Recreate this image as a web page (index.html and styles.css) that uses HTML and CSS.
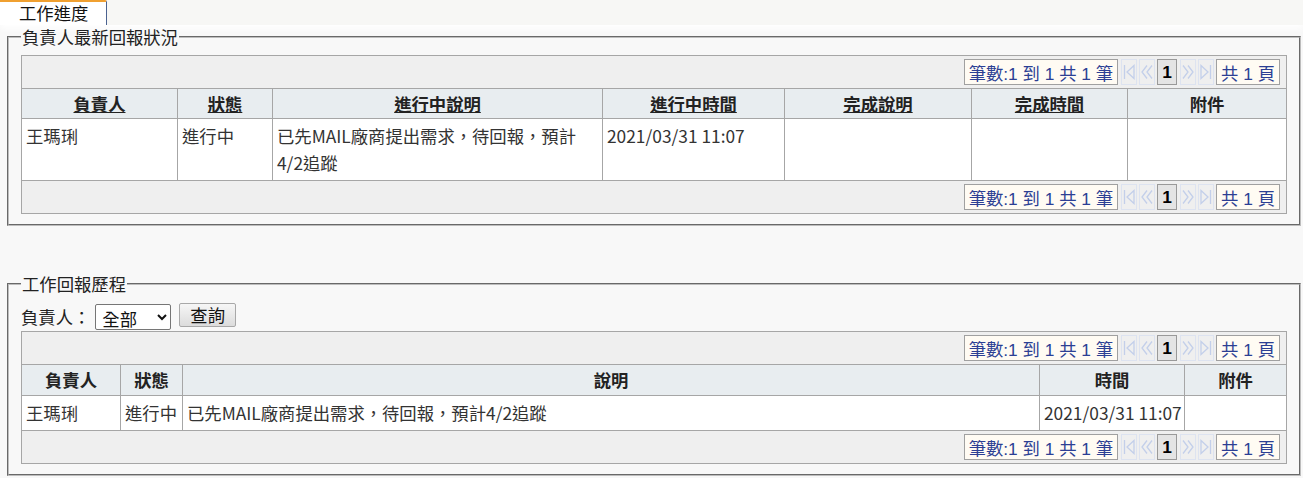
FILE: index.html
```html
<!DOCTYPE html>
<html lang="zh-Hant">
<head>
    <meta charset="UTF-8">
    <meta name="viewport" content="width=device-width, initial-scale=1.0">
    <title>工作進度</title>
    <link rel="stylesheet" href="styles.css">
</head>
<body>

    <div class="tabbar">
        <div class="tab">工作進度</div>
    </div>

    <div class="page">

        <fieldset class="box">
            <legend>負責人最新回報狀況</legend>
            <table class="grid">
                <colgroup>
                    <col style="width: 156px">
                    <col style="width: 95px">
                    <col style="width: 330px">
                    <col style="width: 182px">
                    <col style="width: 187px">
                    <col style="width: 156px">
                    <col>
                </colgroup>
                <tr class="pager-row">
                    <td colspan="7">
                        <div class="pager">
                            <span class="pg-info">筆數:1 到 1 共 1 筆</span>
                            <span class="pg-btn"><svg viewBox="0 0 14 22"><path d="M2.5 4v14M12 4.5l-7 6.5 7 6.5z"/></svg></span>
                            <span class="pg-btn"><svg viewBox="0 0 14 22"><path d="M7 4.5l-5 6.5 5 6.5M12 4.5l-5 6.5 5 6.5"/></svg></span>
                            <span class="pg-cur">1</span>
                            <span class="pg-btn"><svg viewBox="0 0 14 22"><path d="M2 4.5l5 6.5-5 6.5M7 4.5l5 6.5-5 6.5"/></svg></span>
                            <span class="pg-btn"><svg viewBox="0 0 14 22"><path d="M2 4.5l7 6.5-7 6.5zM11.5 4v14"/></svg></span>
                            <span class="pg-info">共 1 頁</span>
                        </div>
                    </td>
                </tr>
                <tr class="head">
                    <th><a href="#">負責人</a></th>
                    <th><a href="#">狀態</a></th>
                    <th><a href="#">進行中說明</a></th>
                    <th><a href="#">進行中時間</a></th>
                    <th><a href="#">完成說明</a></th>
                    <th><a href="#">完成時間</a></th>
                    <th>附件</th>
                </tr>
                <tr class="data tall">
                    <td>王瑪琍</td>
                    <td>進行中</td>
                    <td>已先MAIL廠商提出需求，待回報，預計4/2追蹤</td>
                    <td class="time">2021/03/31 11:07</td>
                    <td></td>
                    <td></td>
                    <td></td>
                </tr>
                <tr class="pager-row">
                    <td colspan="7">
                        <div class="pager">
                            <span class="pg-info">筆數:1 到 1 共 1 筆</span>
                            <span class="pg-btn"><svg viewBox="0 0 14 22"><path d="M2.5 4v14M12 4.5l-7 6.5 7 6.5z"/></svg></span>
                            <span class="pg-btn"><svg viewBox="0 0 14 22"><path d="M7 4.5l-5 6.5 5 6.5M12 4.5l-5 6.5 5 6.5"/></svg></span>
                            <span class="pg-cur">1</span>
                            <span class="pg-btn"><svg viewBox="0 0 14 22"><path d="M2 4.5l5 6.5-5 6.5M7 4.5l5 6.5-5 6.5"/></svg></span>
                            <span class="pg-btn"><svg viewBox="0 0 14 22"><path d="M2 4.5l7 6.5-7 6.5zM11.5 4v14"/></svg></span>
                            <span class="pg-info">共 1 頁</span>
                        </div>
                    </td>
                </tr>
            </table>
        </fieldset>

        <fieldset class="box history">
            <legend>工作回報歷程</legend>
            <div class="filter">
                <label for="owner">負責人：</label>
                <select id="owner">
                    <option>全部</option>
                    <option>王瑪琍</option>
                </select>
                <button type="button">查詢</button>
            </div>
            <table class="grid">
                <colgroup>
                    <col style="width: 99px">
                    <col style="width: 62px">
                    <col style="width: 857px">
                    <col style="width: 145px">
                    <col>
                </colgroup>
                <tr class="pager-row">
                    <td colspan="5">
                        <div class="pager">
                            <span class="pg-info">筆數:1 到 1 共 1 筆</span>
                            <span class="pg-btn"><svg viewBox="0 0 14 22"><path d="M2.5 4v14M12 4.5l-7 6.5 7 6.5z"/></svg></span>
                            <span class="pg-btn"><svg viewBox="0 0 14 22"><path d="M7 4.5l-5 6.5 5 6.5M12 4.5l-5 6.5 5 6.5"/></svg></span>
                            <span class="pg-cur">1</span>
                            <span class="pg-btn"><svg viewBox="0 0 14 22"><path d="M2 4.5l5 6.5-5 6.5M7 4.5l5 6.5-5 6.5"/></svg></span>
                            <span class="pg-btn"><svg viewBox="0 0 14 22"><path d="M2 4.5l7 6.5-7 6.5zM11.5 4v14"/></svg></span>
                            <span class="pg-info">共 1 頁</span>
                        </div>
                    </td>
                </tr>
                <tr class="head">
                    <th>負責人</th>
                    <th>狀態</th>
                    <th>說明</th>
                    <th>時間</th>
                    <th>附件</th>
                </tr>
                <tr class="data">
                    <td>王瑪琍</td>
                    <td>進行中</td>
                    <td>已先MAIL廠商提出需求，待回報，預計4/2追蹤</td>
                    <td class="time">2021/03/31 11:07</td>
                    <td></td>
                </tr>
                <tr class="pager-row">
                    <td colspan="5">
                        <div class="pager">
                            <span class="pg-info">筆數:1 到 1 共 1 筆</span>
                            <span class="pg-btn"><svg viewBox="0 0 14 22"><path d="M2.5 4v14M12 4.5l-7 6.5 7 6.5z"/></svg></span>
                            <span class="pg-btn"><svg viewBox="0 0 14 22"><path d="M7 4.5l-5 6.5 5 6.5M12 4.5l-5 6.5 5 6.5"/></svg></span>
                            <span class="pg-cur">1</span>
                            <span class="pg-btn"><svg viewBox="0 0 14 22"><path d="M2 4.5l5 6.5-5 6.5M7 4.5l5 6.5-5 6.5"/></svg></span>
                            <span class="pg-btn"><svg viewBox="0 0 14 22"><path d="M2 4.5l7 6.5-7 6.5zM11.5 4v14"/></svg></span>
                            <span class="pg-info">共 1 頁</span>
                        </div>
                    </td>
                </tr>
            </table>
        </fieldset>

    </div>

</body>
</html>
```

FILE: styles.css
```css
* {
    box-sizing: border-box;
}

body {
    margin: 0;
    background: #f8f8f8;
    color: #333;
    font-family: "Noto Sans CJK TC", "Noto Sans", sans-serif;
    font-size: 13pt;
}

.tabbar {
    height: 25px;
    background: #f7f7f5;
    display: flex;
    align-items: flex-end;
    box-shadow: 0 4px 6px rgba(255, 255, 255, 0.9);
}

.tab {
    width: 107px;
    height: 25px;
    padding-left: 19px;
    background: #fff;
    border-top: 2px solid #f0a030;
    border-right: 1px solid #4a6290;
    border-top-right-radius: 2px;
    color: #111;
    line-height: 22px;
}

.page {
    padding: 0 2px 0 7px;
}

.box {
    margin: 0;
    padding: 7px 12px 10px 12px;
    border: 2px groove #bdbdbd;
    min-width: 0;
}

.box legend {
    padding: 0 1px;
    color: #222;
    line-height: 23px;
}

.history {
    margin-top: 46px;
    padding-top: 8px;
}

.filter {
    display: flex;
    align-items: flex-start;
    height: 28px;
    color: #222;
}

.filter label {
    line-height: 28px;
}

.filter select {
    width: 76px;
    height: 26px;
    margin: 1px 0 0 5px;
    padding: 0 2px;
    border: 1px solid #767676;
    border-radius: 2px;
    background: #fff;
    font-family: inherit;
    font-size: 13pt;
    color: #111;
}

.filter button {
    height: 24px;
    margin-left: 8px;
    padding: 0 10px;
    border: 1px solid #a8a8a8;
    border-radius: 2px;
    background: linear-gradient(#f6f6f6, #dcdcdc);
    font-family: inherit;
    font-size: 13pt;
    line-height: 20px;
    color: #111;
}

.grid {
    width: 100%;
    border-collapse: collapse;
    table-layout: fixed;
    background: #fff;
}

.grid td,
.grid th {
    border: 1px solid #a6a6a6;
}

.pager-row td {
    background: #efefef;
    padding: 3px 6px 3px 0;
    height: 33px;
}

.pager {
    display: flex;
    justify-content: flex-end;
    gap: 2px;
}

.pager span {
    height: 26px;
    display: flex;
    align-items: center;
    justify-content: center;
}

.pg-info {
    padding: 0 4px;
    border: 1px solid #a0a0a0;
    background: #fffbf3;
    color: #2c3f94;
    font-family: "Liberation Sans", "Noto Sans CJK TC", sans-serif;
}

.pg-info:first-child {
    margin-right: 1px;
}

.pg-btn {
    width: 16px;
    border: 1px solid #dde3f0;
}

.pg-btn svg {
    width: 14px;
    height: 22px;
    fill: none;
    stroke: #c3cfea;
    stroke-width: 1.3;
}

.pg-cur {
    width: 20px;
    margin: 0 1px 0 0;
    border: 1px solid #999;
    background: #e4e4e4;
    color: #000;
    font-family: "Liberation Sans", sans-serif;
    font-weight: bold;
}

.head th {
    height: 30px;
    padding: 1px 4px;
    background: #e8edf0;
    color: #222;
    font-weight: bold;
    line-height: 24px;
}

.history .head th {
    height: 31px;
}

.head a {
    color: #222;
    text-decoration: underline;
}

.data td {
    height: 34px;
    padding: 3px 4px 4px;
    vertical-align: top;
    line-height: 27px;
    color: #333;
}

.history .data td {
    height: 33px;
}

.data.tall td {
    height: 60px;
}

.data .time {
    white-space: nowrap;
}
```
